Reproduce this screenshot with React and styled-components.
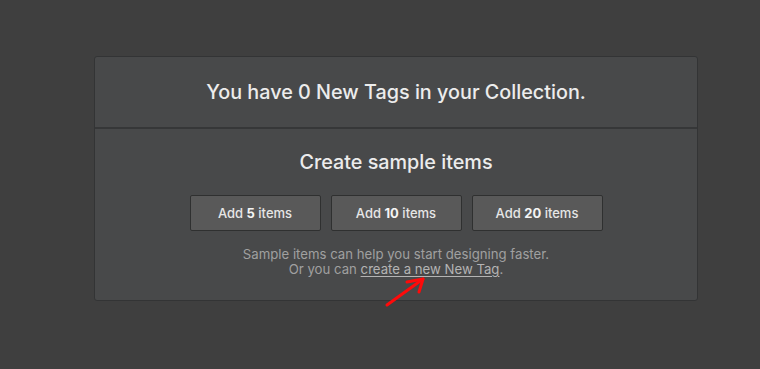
import React from "react";
import styled, { createGlobalStyle } from "styled-components";

const Global = createGlobalStyle`
  html, body { margin: 0; padding: 0; background: #3f3f3f; }
  body { font-family: Inter, "Noto Sans", Arial, sans-serif; -webkit-font-smoothing: antialiased; }
  #root { min-height: 369px; }
`;

const Page = styled.div`
  position: relative;
  width: 760px;
  height: 369px;
  padding: 56px 0 0 94px;
  box-sizing: border-box;
`;

const Card = styled.div`
  width: 604px;
  box-sizing: border-box;
  background: #48494a;
  border: 1px solid #333435;
  border-radius: 3px;
  display: flex;
  flex-direction: column;
`;

const Header = styled.div`
  height: 72px;
  display: flex;
  align-items: center;
  justify-content: center;
  border-bottom: 2px solid #363738;
  box-sizing: border-box;
`;

const Title = styled.h2`
  margin: 0;
  font-size: 19.8px;
  line-height: 24px;
  font-weight: 500;
  color: #ececec;
  letter-spacing: 0;
`;

const Body = styled.div`
  display: flex;
  flex-direction: column;
  align-items: center;
  padding: 21px 0 23px;
`;

const SubTitle = styled.h3`
  margin: 0 0 21px;
  font-size: 19.8px;
  line-height: 24px;
  font-weight: 500;
  color: #ececec;
`;

const Buttons = styled.div`
  display: flex;
  gap: 10px;
`;

const Button = styled.button`
  width: 131px;
  height: 36px;
  background: #595959;
  border: 1px solid #2f3030;
  border-radius: 2px;
  color: #e6e6e6;
  font-family: inherit;
  font-size: 13px;
  font-weight: 500;
  cursor: pointer;
  b { font-weight: 700; color: #f4f4f4; }
`;

const Note = styled.p`
  margin: 16px 0 0;
  text-align: center;
  font-size: 13.2px;
  line-height: 15px;
  color: #a0a0a0;
  a { color: #b4b4b4; text-decoration: underline; text-underline-offset: 2px; }
`;

const Arrow = styled.svg`
  position: absolute;
  left: 380px;
  top: 272px;
  overflow: visible;
`;

export default function App() {
  return (
    <>
      <Global />
      <Page>
        <Card>
          <Header>
            <Title>You have 0 New Tags in your Collection.</Title>
          </Header>
          <Body>
            <SubTitle>Create sample items</SubTitle>
            <Buttons>
              <Button>Add <b>5</b> items</Button>
              <Button>Add <b>10</b> items</Button>
              <Button>Add <b>20</b> items</Button>
            </Buttons>
            <Note>
              Sample items can help you start designing faster.
              <br />
              Or you can <a href="#">create a new New Tag</a>.
            </Note>
          </Body>
        </Card>
        <Arrow width="50" height="40" viewBox="0 0 50 40">
          <g stroke="#ff0a0a" strokeWidth="3" strokeLinecap="round" strokeLinejoin="round" fill="none">
            <path d="M7 33 L43 7" />
            <path d="M27 10 L43 7 L39 20" />
          </g>
        </Arrow>
      </Page>
    </>
  );
}
